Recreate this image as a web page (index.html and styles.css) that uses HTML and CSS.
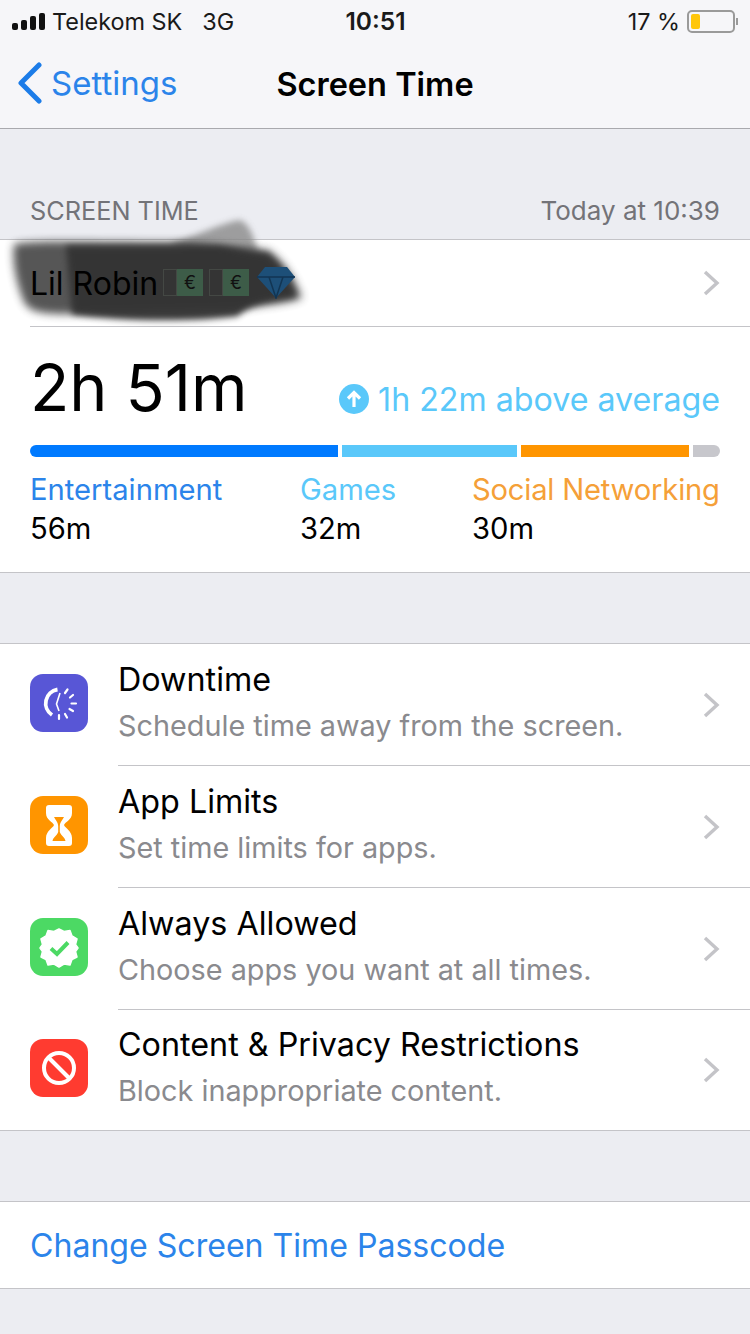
FILE: index.html
```html
<!DOCTYPE html>
<html lang="en">
<head>
    <meta charset="UTF-8">
    <meta name="viewport" content="width=device-width, initial-scale=1.0">
    <title>Screen Time</title>
    <link rel="stylesheet" href="styles.css">
</head>
<body>
    <div class="top-bar">
        <div class="status-bar">
            <div class="status-left">
                <div class="signal"><span class="s1"></span><span class="s2"></span><span class="s3"></span><span class="s4"></span></div>
                <span class="carrier">Telekom SK</span>
                <span class="network">3G</span>
            </div>
            <div class="clock">10:51</div>
            <div class="status-right">
                <span>17 %</span>
                <div class="battery"><div class="battery-level"></div></div>
                <div class="battery-tip"></div>
            </div>
        </div>
        <div class="nav-bar">
            <div class="back">
                <svg class="back-icon" width="26" height="42" viewBox="0 0 26 42"><path d="M23 3 L5 21 L23 39" fill="none" stroke="#1c7ce8" stroke-width="5" stroke-linecap="round" stroke-linejoin="round"/></svg>
                <span>Settings</span>
            </div>
            <div class="nav-title">Screen Time</div>
        </div>
    </div>

    <div class="section-head">
        <span class="section-title">SCREEN TIME</span>
        <span>Today at 10:39</span>
    </div>

    <div class="group">
        <div class="name-row">
            <span class="name">Lil Robin</span>
            <svg class="chev" width="18" height="26" viewBox="0 0 18 26"><path d="M3 2 L15 13 L3 24" fill="none" stroke="#c4c4c8" stroke-width="3.4"/></svg>
            <!-- scribble over the name -->
            <svg class="scribble" width="320" height="120" viewBox="0 0 320 120">
                <path class="smear-light" d="M170 34 C200 24 225 12 240 10 C250 14 254 28 258 42 L200 50 Z"/>
                <path class="smear-soft" d="M14 34 C40 30 70 32 190 32 L268 40 C282 50 292 62 302 88 C280 96 260 94 240 100 L70 104 C40 104 30 102 24 92 C16 72 12 52 14 34 Z"/>
                <path class="smear" d="M66 36 H220 L268 44 C280 54 288 66 296 86 C270 92 250 92 238 106 C200 112 120 112 72 104 Z"/>
            </svg>
            <div class="name-extras">
                <div class="note"><span class="note-pale"></span><span class="note-green">€</span></div>
                <div class="note"><span class="note-pale"></span><span class="note-green">€</span></div>
                <svg class="gem" width="40" height="34" viewBox="0 0 40 34"><path d="M9 2 H31 L39 12 L20 33 L1 12 Z" fill="#1d4f78"/><path d="M1 12 H39 M13 12 L20 33 L27 12" stroke="#123553" stroke-width="1.5" fill="none"/></svg>
            </div>
        </div>
        <div class="stats">
            <div class="total-line">
                <div class="total">2h 51m</div>
                <div class="average">
                    <svg width="30" height="30" viewBox="0 0 30 30"><circle cx="15" cy="15" r="15" fill="#5ac8fa"/><path d="M15 23 V9 M9 14.5 L15 8.5 L21 14.5" fill="none" stroke="#fff" stroke-width="3.2"/></svg>
                    <span>1h 22m above average</span>
                </div>
            </div>
            <div class="bar">
                <div class="seg seg-blue"></div>
                <div class="seg seg-sky"></div>
                <div class="seg seg-orange"></div>
                <div class="seg seg-gray"></div>
            </div>
            <div class="legend">
                <div class="legend-item">
                    <div class="legend-name c-blue">Entertainment</div>
                    <div class="legend-val">56m</div>
                </div>
                <div class="legend-item">
                    <div class="legend-name c-sky">Games</div>
                    <div class="legend-val">32m</div>
                </div>
                <div class="legend-item">
                    <div class="legend-name c-orange">Social Networking</div>
                    <div class="legend-val">30m</div>
                </div>
            </div>
        </div>
    </div>

    <div class="group group-list">
        <div class="item">
            <div class="app-icon bg-purple">
                <svg width="58" height="58" viewBox="0 0 58 58">
                    <path d="M27.500 15.500 A14 14 0 0 0 22 41" fill="none" stroke="#fff" stroke-width="3.8"/>
                    <path d="M30 19 L26.500 30 L29 37" fill="none" stroke="#fff" stroke-width="1.600"/>
                    <path d="M35 19 L37.500 15.500 M40 23.500 L43 21 M41.500 29.500 H46 M39.500 35 L43 37 M35 40 L37 43.500 M29 41 V45" stroke="#fff" stroke-width="2.200" stroke-linecap="round"/>
                </svg>
            </div>
            <div class="item-body">
                <div class="item-text">
                    <div class="item-title">Downtime</div>
                    <div class="item-sub">Schedule time away from the screen.</div>
                </div>
                <svg class="chev" width="18" height="26" viewBox="0 0 18 26"><path d="M3 2 L15 13 L3 24" fill="none" stroke="#c4c4c8" stroke-width="3.4"/></svg>
            </div>
        </div>
        <div class="item">
            <div class="app-icon bg-orange">
                <svg width="58" height="58" viewBox="0 0 58 58">
                    <path fill-rule="evenodd" fill="#fff" d="M19 9 H39 Q42 9 42 12 V17 C42 24 35 26 34 29 C35 32 42 35 42 42 V47 Q42 50 39 50 H19 Q16 50 16 47 V42 C16 35 23 32 24 29 C23 26 16 24 16 17 V12 Q16 9 19 9 Z M24 21 C26 25 28 26 28.200 30 V36 C27 40 23 41 22.500 45 H35.500 C35 41 31 40 29.800 36 V30 C30 26 32 25 34 21 Z"/>
                </svg>
            </div>
            <div class="item-body">
                <div class="item-text">
                    <div class="item-title">App Limits</div>
                    <div class="item-sub">Set time limits for apps.</div>
                </div>
                <svg class="chev" width="18" height="26" viewBox="0 0 18 26"><path d="M3 2 L15 13 L3 24" fill="none" stroke="#c4c4c8" stroke-width="3.4"/></svg>
            </div>
        </div>
        <div class="item">
            <div class="app-icon bg-green">
                <svg width="58" height="58" viewBox="0 0 58 58">
                    <path fill="#fff" d="M29 11 L34 13.500 L40 12.500 L42 18 L47 21 L45.500 26.500 L48 30 L45.500 33.500 L47 39 L42 41.500 L40 47 L34 46 L29 49 L24 46 L18 47 L16 41.500 L11 39 L12.500 33.500 L10 30 L12.500 26.500 L11 21 L16 18 L18 12.500 L24 13.500 Z" stroke="#fff" stroke-width="1.500" stroke-linejoin="round"/>
                    <path d="M21 30.500 L27 36 L38 24.500" fill="none" stroke="#4cd964" stroke-width="4"/>
                </svg>
            </div>
            <div class="item-body">
                <div class="item-text">
                    <div class="item-title">Always Allowed</div>
                    <div class="item-sub">Choose apps you want at all times.</div>
                </div>
                <svg class="chev" width="18" height="26" viewBox="0 0 18 26"><path d="M3 2 L15 13 L3 24" fill="none" stroke="#c4c4c8" stroke-width="3.4"/></svg>
            </div>
        </div>
        <div class="item">
            <div class="app-icon bg-red">
                <svg width="58" height="58" viewBox="0 0 58 58">
                    <circle cx="29" cy="29" r="15" fill="none" stroke="#fff" stroke-width="4"/>
                    <path d="M18.500 18.500 L39.500 39.500" stroke="#fff" stroke-width="4"/>
                </svg>
            </div>
            <div class="item-body">
                <div class="item-text">
                    <div class="item-title">Content &amp; Privacy Restrictions</div>
                    <div class="item-sub">Block inappropriate content.</div>
                </div>
                <svg class="chev" width="18" height="26" viewBox="0 0 18 26"><path d="M3 2 L15 13 L3 24" fill="none" stroke="#c4c4c8" stroke-width="3.4"/></svg>
            </div>
        </div>
    </div>

    <div class="group group-link">
        <div class="link-row">Change Screen Time Passcode</div>
    </div>
</body>
</html>
```
FILE: styles.css
```css
body {
    margin: 0;
    padding: 0;
    height: 1334px;
    overflow: hidden;
    background-color: #ecedf2;
    color: #000;
    font-family: Inter, "Liberation Sans", sans-serif;
}

/* top */
.top-bar {
    height: 128px;
    background-color: #f6f6f9;
    border-bottom: 1px solid #a9a9ae;
}
.status-bar {
    height: 42px;
    padding: 0 12px;
    display: grid;
    grid-template-columns: 1fr auto 1fr;
    align-items: center;
    font-size: 23.4px;
    color: #1a1a1a;
}
.status-left {
    display: flex;
    align-items: center;
}
.signal {
    display: flex;
    align-items: flex-end;
    gap: 3px;
    height: 17px;
    margin-right: 7px;
}
.signal span {
    width: 6px;
    background-color: #111;
    border-radius: 2px;
}
.s1 { height: 7px; }
.s2 { height: 10px; }
.s3 { height: 14px; }
.s4 { height: 17px; }
.network {
    margin-left: 20px;
}
.clock {
    font-size: 24.5px;
    font-weight: 600;
    margin-left: 1px;
}
.status-right {
    display: flex;
    align-items: center;
    justify-content: flex-end;
}
.battery {
    width: 40px;
    height: 15px;
    margin-left: 7px;
    border: 2px solid #9a9a9a;
    border-radius: 5px;
    padding: 2px;
    box-sizing: content-box;
}
.battery-level {
    width: 9px;
    height: 100%;
    background-color: #ffc60a;
    border-radius: 2px;
}
.battery-tip {
    width: 2px;
    height: 7px;
    margin-left: 1px;
    background-color: #9a9a9a;
}
.nav-bar {
    height: 86px;
    position: relative;
    display: flex;
    align-items: center;
    justify-content: center;
    padding-bottom: 2px;
    box-sizing: border-box;
}
.back {
    position: absolute;
    left: 16px;
    top: 20px;
    display: flex;
    align-items: center;
    gap: 9px;
    font-size: 33px;
    color: #2b84ea;
}
.nav-title {
    font-size: 32.5px;
    font-weight: 600;
}

/* groups */
.section-head {
    height: 110px;
    box-sizing: border-box;
    padding: 0 30px 13px 30px;
    display: flex;
    justify-content: space-between;
    align-items: flex-end;
    font-size: 26px;
    color: #737378;
}
.section-title {
    font-size: 25.3px;
}
.group {
    background-color: #fff;
    border-top: 1px solid #c4c4c8;
    border-bottom: 1px solid #c4c4c8;
}
.name-row {
    height: 86px;
    margin-left: 30px;
    padding-right: 30px;
    border-bottom: 1px solid #c4c4c8;
    position: relative;
    display: flex;
    align-items: center;
    justify-content: space-between;
    font-size: 32px;
}
.name {
    position: relative;
    z-index: 2;
}
.chev {
    flex: none;
    display: block;
}
.scribble {
    position: absolute;
    left: -30px;
    top: -30px;
    z-index: 1;
    pointer-events: none;
}
.smear {
    fill: #333;
    opacity: 0.95;
    filter: blur(3px);
}
.smear-soft {
    fill: #444;
    opacity: 0.9;
    filter: blur(4px);
}
.smear-light {
    fill: #8a8a8a;
    opacity: 0.8;
    filter: blur(3px);
}
.name-extras {
    position: absolute;
    left: 133px;
    top: 25px;
    z-index: 2;
    display: flex;
    align-items: center;
    gap: 6px;
}
.note {
    width: 40px;
    height: 27px;
    display: flex;
}
.note-pale {
    width: 14px;
    border: 1px solid #444844;
    box-sizing: border-box;
}
.note-green {
    flex: 1;
    background-color: #3d5c48;
    color: #111;
    font-size: 18px;
    line-height: 27px;
    text-align: center;
}
.gem {
    margin-left: 1px;
}
.stats {
    height: 245px;
    box-sizing: border-box;
    padding: 0 30px;
}
.total-line {
    height: 118px;
    display: flex;
    justify-content: space-between;
    align-items: center;
}
.total {
    font-size: 64.5px;
    margin-top: 4px;
}
.average {
    display: flex;
    align-items: center;
    gap: 9px;
    margin-top: 26px;
    font-size: 32.2px;
    color: #5ac8fa;
}
.bar {
    display: flex;
    gap: 4px;
    height: 12px;
}
.seg-blue { width: 308px; background-color: #007aff; border-radius: 6px 0 0 6px; }
.seg-sky { width: 175px; background-color: #5ac8fa; }
.seg-orange { width: 168px; background-color: #ff9500; }
.seg-gray { flex: 1; background-color: #c7c7cc; border-radius: 0 6px 6px 0; }
.legend {
    display: grid;
    grid-template-columns: 270px 172px 1fr;
    margin-top: 15px;
    font-size: 29.2px;
}
.legend-name {
    margin-bottom: 4px;
}
.c-blue { color: #2b84ea; }
.c-sky { color: #5ac8fa; }
.c-orange { color: #f5a038; white-space: nowrap; letter-spacing: -0.2px; }

.group-list {
    margin-top: 70px;
}
.item {
    padding-left: 30px;
    display: flex;
    align-items: center;
}
.app-icon {
    width: 58px;
    height: 58px;
    border-radius: 13px;
    flex: none;
    margin-right: 30px;
    margin-bottom: 5px;
}
.app-icon svg {
    display: block;
}
.bg-purple { background-color: #5856d6; }
.bg-orange { background-color: #ff9500; }
.bg-green { background-color: #4cd964; }
.bg-red { background-color: #ff3b30; }
.item-body {
    flex: 1;
    height: 121px;
    padding-right: 30px;
    border-bottom: 1px solid #c4c4c8;
    display: flex;
    align-items: center;
}
.item:last-child .item-body {
    height: 120px;
    border-bottom: none;
}
.item-text {
    flex: 1;
    display: flex;
    flex-direction: column;
    gap: 9px;
    padding-bottom: 7px;
}
.item-title {
    font-size: 32.3px;
}
.item-sub {
    font-size: 28.8px;
    color: #8a8a8e;
}
.group-link {
    margin-top: 70px;
}
.link-row {
    height: 86px;
    padding-left: 30px;
    display: flex;
    align-items: center;
    font-size: 32.1px;
    color: #2b84ea;
}
```
